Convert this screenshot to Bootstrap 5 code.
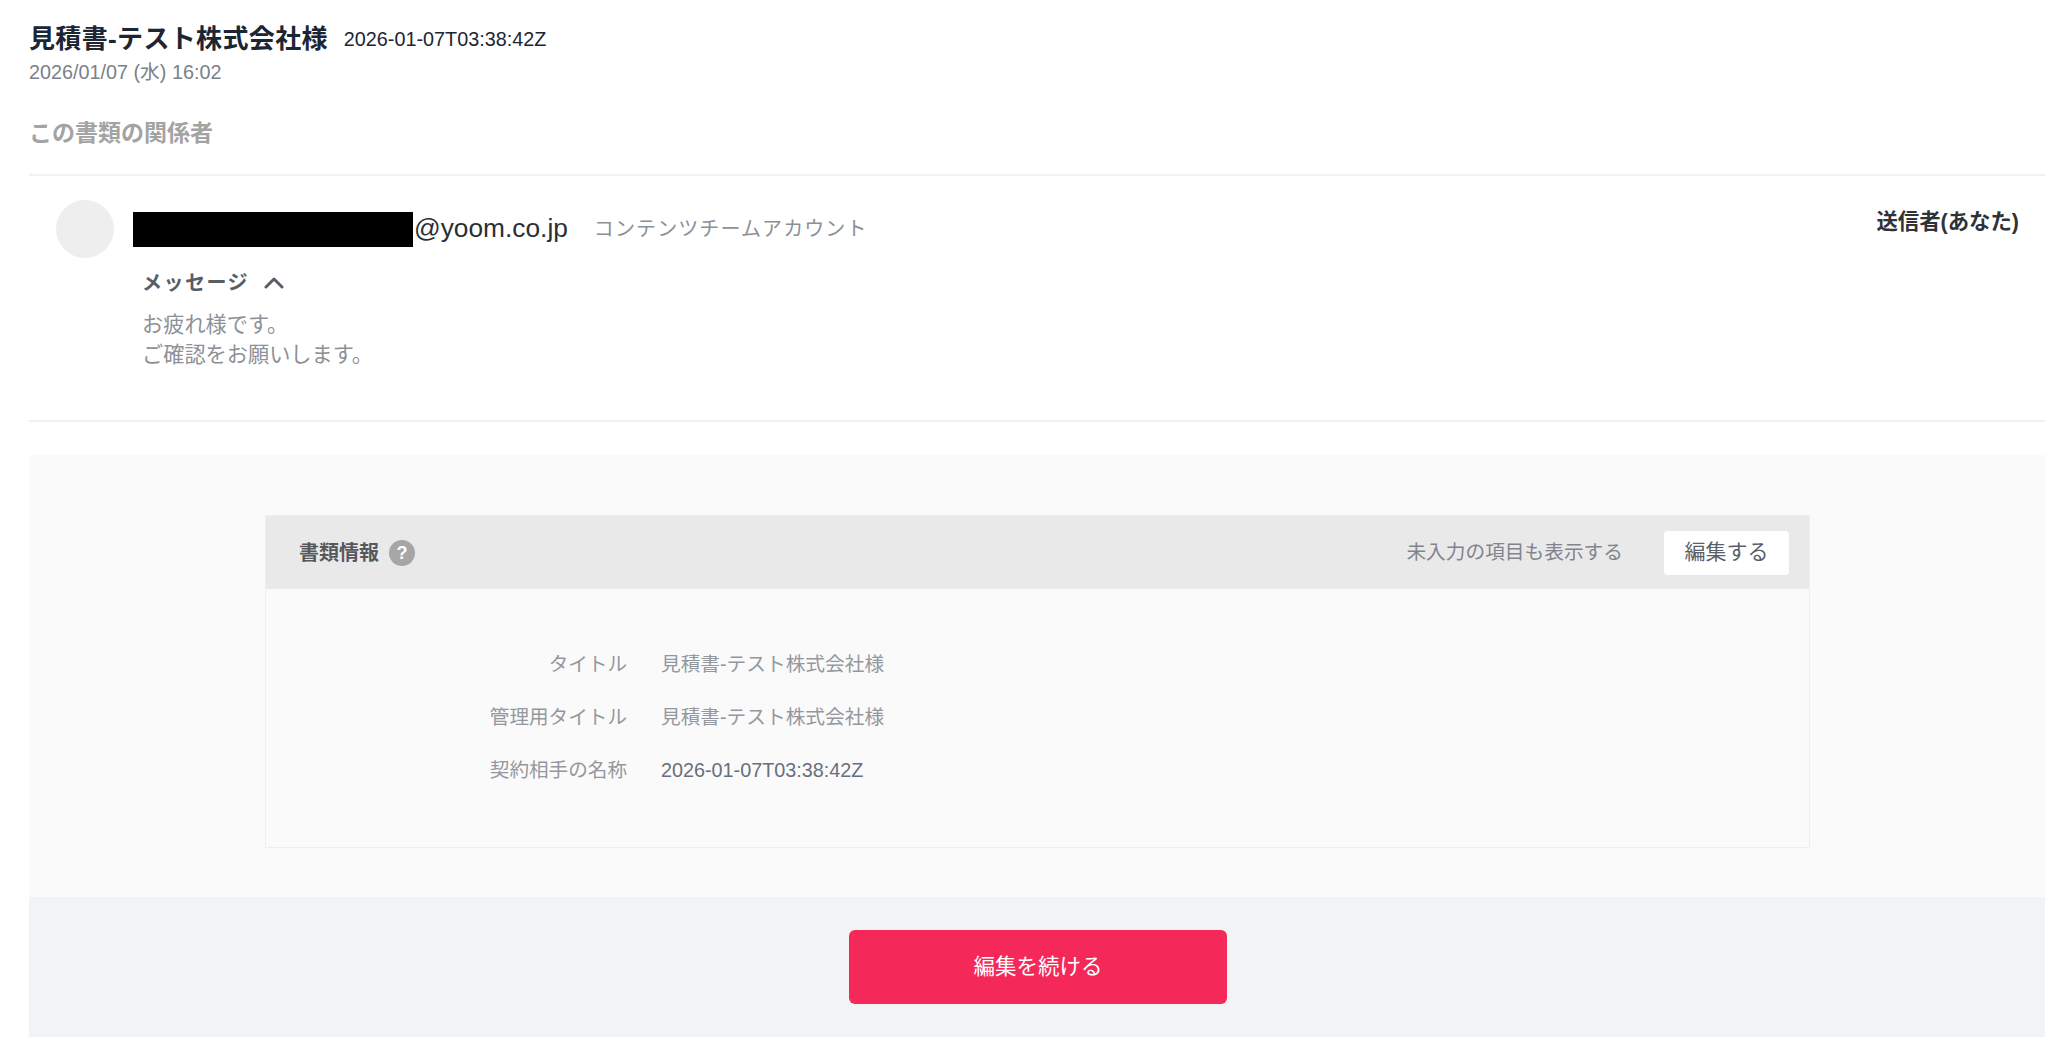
<!DOCTYPE html>
<html lang="ja">
<head>
  <meta charset="UTF-8">
  <meta name="viewport" content="width=device-width, initial-scale=1.0">
  <title>見積書-テスト株式会社様</title>

  <link href="https://cdn.jsdelivr.net/npm/bootstrap@5.3.0/dist/css/bootstrap.min.css" rel="stylesheet">

  <style>
    body {
      background-color: #fff;
      font-family: "Liberation Sans", "Noto Sans CJK JP", sans-serif;
      font-size: 20px;
      color: #6f7782;
    }

    .page-wrap {
      padding: 22px 3px 0 29px;
    }

    .doc-title {
      line-height: 34px;
      margin-bottom: 2px;
      color: #1c2533;
    }

    .doc-title h1 {
      font-size: 26px;
      font-weight: 700;
      line-height: 34px;
      letter-spacing: .35px;
      margin: 0 16px 0 0;
    }

    .doc-stamp {
      font-size: 19.8px;
      line-height: 34px;
    }

    .doc-date {
      font-size: 19.8px;
      line-height: 28px;
      color: #7b8189;
    }

    .people-title {
      font-size: 23px;
      font-weight: 700;
      line-height: 30px;
      color: #a3a3a3;
      margin-top: 32px;
      padding-bottom: 26px;
      border-bottom: 2px solid #f2f2f2;
    }

    .person-block {
      padding: 24px 26px 50px 27px;
      border-bottom: 2px solid #f0f0f0;
    }

    .avatar-dot {
      width: 58px;
      height: 58px;
      border-radius: 50%;
      background-color: #eee;
      margin-right: 19px;
    }

    .redacted {
      width: 280px;
      height: 35px;
      background-color: #000;
    }

    .mail-tail {
      font-size: 26.3px;
      line-height: 33px;
      color: #2a2f36;
      margin-left: 1px;
      margin-bottom: 2px;
    }

    .person-role {
      line-height: 35px;
      letter-spacing: 1.1px;
      color: #8b9098;
      margin-left: 26px;
    }

    .role-tag {
      font-size: 21.4px;
      font-weight: 700;
      line-height: 30px;
      color: #2f3237;
      margin-top: 7px;
    }

    .msg-box {
      margin: 10px 0 0 86px;
    }

    .msg-head {
      font-weight: 700;
      line-height: 30px;
      color: #585e67;
      letter-spacing: 1.5px;
      gap: 15px;
    }

    .msg-body {
      font-size: 21.2px;
      line-height: 30px;
      margin-top: 12px;
      color: #8d9197;
    }

    .info-panel {
      background-color: #fafafa;
      margin-top: 33px;
      padding: 60px 235px 49px 236px;
    }

    .info-card {
      background-color: #fafafa;
      border: 1px solid #eee;
      border-radius: 0;
    }

    .info-card .card-header {
      height: 73px;
      background-color: #e9e9e9;
      border: 0;
      border-radius: 0;
      padding: 0 20px 0 33px;
    }

    .info-name {
      font-weight: 700;
      color: #55585d;
    }

    .help-dot {
      width: 26px;
      height: 26px;
      border-radius: 50%;
      background-color: #a6a6a6;
      color: #fff;
      font-size: 18px;
      font-weight: 700;
      line-height: 26px;
      text-align: center;
      margin-left: 10px;
    }

    .show-empty {
      font-size: 19.7px;
      color: #80858c;
      margin-right: 41px;
    }

    .edit-btn {
      width: 125px;
      height: 44px;
      padding: 0 0 2px;
      font-size: 21px;
      line-height: 40px;
      color: #5a6068;
      background-color: #fff;
      border: 0;
      border-radius: 4px;
    }

    .info-card .card-body {
      padding: 60px 0 62px;
    }

    .info-row {
      line-height: 30px;
      margin-bottom: 23px;
    }

    .info-row:last-child {
      margin-bottom: 0;
    }

    .info-label {
      width: 361px;
      font-size: 19.6px;
      text-align: right;
      color: #94989e;
      margin-right: 34px;
    }

    .info-value {
      font-size: 19.7px;
      color: #94989e;
    }

    .info-value-dark {
      font-size: 19.8px;
      color: #68707b;
    }

    .action-bar {
      height: 140px;
      padding-top: 33px;
      background-color: #f2f3f5;
    }

    .continue-btn {
      width: 378px;
      height: 74px;
      margin-left: 2px;
      font-size: 21.5px;
      color: #fff;
      background-color: #f5285a;
      border: 0;
      border-radius: 6px;
    }
  </style>
</head>
<body>
  <div class="page-wrap">
    <div class="doc-title d-flex align-items-center">
      <h1>見積書-テスト株式会社様</h1>
      <span class="doc-stamp">2026-01-07T03:38:42Z</span>
    </div>
    <div class="doc-date">2026/01/07 (水) 16:02</div>

    <div class="people-title">この書類の関係者</div>

    <div class="person-block">
      <div class="d-flex justify-content-between align-items-start">
        <div class="d-flex align-items-center">
          <div class="avatar-dot"></div>
          <div class="redacted"></div>
          <span class="mail-tail">@yoom.co.jp</span>
          <span class="person-role">コンテンツチームアカウント</span>
        </div>
        <div class="role-tag">送信者(あなた)</div>
      </div>
      <div class="msg-box">
        <div class="msg-head d-flex align-items-center">
          <span>メッセージ</span>
          <svg width="20" height="12" viewBox="0 0 20 12" fill="none" stroke="#585e67" stroke-width="3" stroke-linecap="round" stroke-linejoin="round"><path d="M2 10 L10 2 L18 10"/></svg>
        </div>
        <div class="msg-body">お疲れ様です。<br>ご確認をお願いします。</div>
      </div>
    </div>

    <div class="info-panel">
      <div class="card info-card">
        <div class="card-header d-flex align-items-center justify-content-between">
          <div class="d-flex align-items-center">
            <span class="info-name">書類情報</span>
            <span class="help-dot">?</span>
          </div>
          <div class="d-flex align-items-center">
            <span class="show-empty">未入力の項目も表示する</span>
            <button type="button" class="btn edit-btn">編集する</button>
          </div>
        </div>
        <div class="card-body">
          <div class="info-row d-flex">
            <div class="info-label">タイトル</div>
            <div class="info-value">見積書-テスト株式会社様</div>
          </div>
          <div class="info-row d-flex">
            <div class="info-label">管理用タイトル</div>
            <div class="info-value">見積書-テスト株式会社様</div>
          </div>
          <div class="info-row d-flex">
            <div class="info-label">契約相手の名称</div>
            <div class="info-value-dark">2026-01-07T03:38:42Z</div>
          </div>
        </div>
      </div>
    </div>

    <div class="action-bar text-center">
      <button type="button" class="btn continue-btn">編集を続ける</button>
    </div>
  </div>

  <script src="https://cdn.jsdelivr.net/npm/bootstrap@5.3.0/dist/js/bootstrap.bundle.min.js"></script>
</body>
</html>
